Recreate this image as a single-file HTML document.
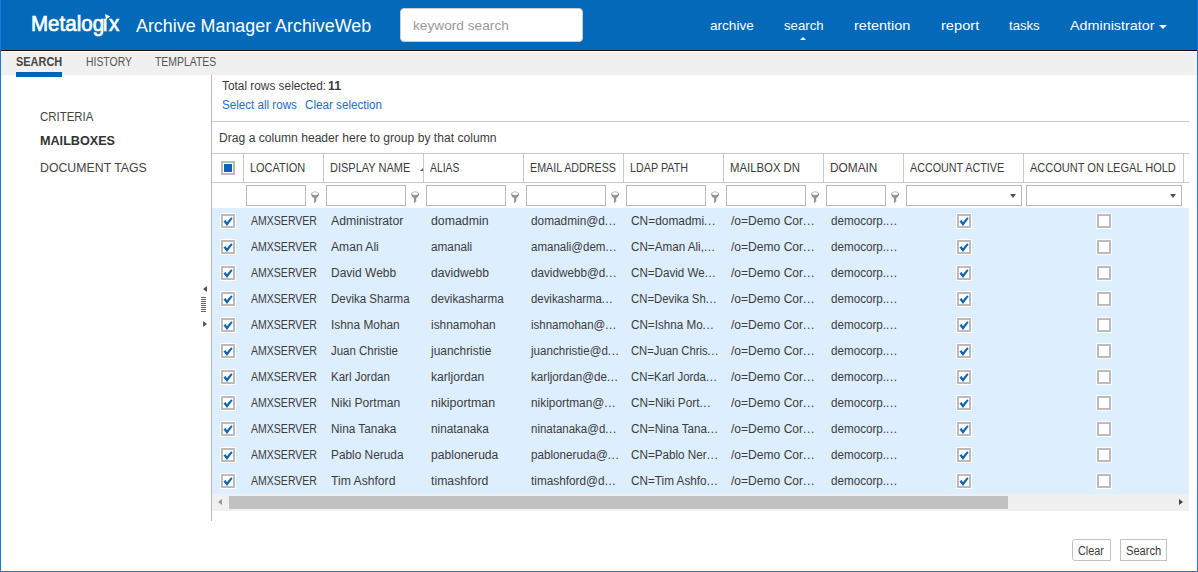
<!DOCTYPE html><html><head><meta charset="utf-8"><title>ArchiveWeb</title><style>*{margin:0;padding:0;box-sizing:border-box}
html,body{width:1198px;height:572px;overflow:hidden;background:#fff}
body{font-family:"Liberation Sans",sans-serif;font-size:12px;color:#333}
i{display:block;font-style:normal}
#frame{position:absolute;left:0;top:0;width:1198px;height:572px;background:#fff;overflow:hidden}
#frame>*{position:absolute}
.t{white-space:nowrap;transform-origin:0 0;line-height:14px;font-size:12px;color:#3c3c3c}
.bl{left:0;top:0;width:1px;height:572px;background:#177bd3}
.br{left:1197px;top:0;width:1px;height:572px;background:#177bd3}
.bb{left:0;top:571px;width:1198px;height:1px;background:#177bd3}
#hdr{left:0;top:0;width:1198px;height:51px;background:#0369b8;border-bottom:1px solid #111}
.logo{font-size:21.5px;color:#fff;line-height:26px;-webkit-text-stroke:0.7px #fff}
.logotri{left:104.5px;top:13.5px}
.title{font-size:18px;color:#fff;line-height:24px}
.kw{left:400px;top:8px;width:183px;height:34px;background:#fff;border-radius:4px;border:1px solid #ccc}
.kwt{font-size:13.6px;color:#999;line-height:18px}
.menu{font-size:13.6px;color:#fff;line-height:18px}
.uptri{left:799.6px;top:36.5px;border-left:3.7px solid transparent;border-right:3.7px solid transparent;border-bottom:3.8px solid #fff}
.caret{left:1159.1px;top:24.8px;border-left:4px solid transparent;border-right:4px solid transparent;border-top:4px solid #fff}
#nav{left:0;top:52px;width:1198px;height:23px;background:#f0f0f0}
.n1{font-weight:bold;color:#444}
.n2{color:#555}
.nu{left:16px;top:72px;width:46px;height:5px;background:#0067b8}
.sd{font-size:13px;line-height:16px;color:#444}
.sdb{font-weight:bold;color:#333}
.gl{left:211px;top:75px;width:1px;height:446px;background:#bbb}
.gb{font-weight:bold}
.lk{color:#1670c8}
.hl1{left:212px;top:121px;width:977px;height:1px;background:#c8c8c8}
.hl2{left:212px;top:153px;width:977px;height:1px;background:#c8c8c8}
.hl3{left:212px;top:182px;width:977px;height:1px;background:#c8c8c8}
.vd{top:153px;width:1px;height:30px;background:#c8c8c8}
.hcb{left:221px;top:161px;width:14px;height:14px;border:2px solid #bbb;background:#fff}
.hcb b{position:absolute;left:1px;top:1px;width:8px;height:8px;background:#0a64b8}
.sort{left:420px;top:168px;border-left:3px solid transparent;border-bottom:3px solid #555}
.fi{top:185px;height:21px;border:1px solid #bbb;background:#fff}
.pin{top:190.6px}
.dd{top:194px;border-left:3.5px solid transparent;border-right:3.5px solid transparent;border-top:4px solid #505050}
.rowsbg{left:212px;top:208px;width:977px;height:286px;background:#ddeeff}
.cb{width:16px;height:16px;border:1px solid #fff;background:#fff;box-shadow:inset 0 0 0 2px #bbb}
.cb svg{position:absolute;left:2px;top:2px}
.sb{left:212px;top:494px;width:977px;height:17px;background:#f0f0f0}
.sb>*{position:absolute}
.thumb{left:17px;top:2px;width:779px;height:13px;background:#c1c1c1}
.sbl{left:5.7px;top:4.7px;border-top:3.8px solid transparent;border-bottom:3.8px solid transparent;border-right:4.5px solid #999}
.sbr{left:966.8px;top:4.7px;border-top:3.8px solid transparent;border-bottom:3.8px solid transparent;border-left:4.5px solid #444}
.btn{top:539px;height:22px;border:1px solid #c2c2c2;background:#fff}
.b1{left:1072px;width:39px;border-radius:3px 0 0 3px}.b2{left:1120px;width:47px}
.spl-up{left:202.5px;top:286px;border-top:3.5px solid transparent;border-bottom:3.5px solid transparent;border-right:4px solid #555}
.spl-rt{left:203px;top:320.8px;border-top:3.5px solid transparent;border-bottom:3.5px solid transparent;border-left:4px solid #555}
.spl-grip{left:201px;top:297px;width:5px;height:15px;background:repeating-linear-gradient(#666 0 1px,#fff 1px 2px)}
</style></head><body>
<div id="frame">
<div id="hdr"></div>
<span class="t logo" style="left:31.3px;top:11px;transform:scaleX(0.9551);">Metalog<span style="margin-left:-1.8px;margin-right:1px">ı</span>x</span>
<svg class="logotri" width="6" height="6" viewBox="0 0 6 6"><path d="M0.1 0.1 L5.1 2.6 L0.9 5.4 Z" fill="#fff"/></svg>
<span class="t title" style="left:136px;top:14px;transform:scaleX(0.9929);">Archive Manager ArchiveWeb</span>
<div class="kw"></div>
<span class="t kwt" style="left:413px;top:17px;transform:scaleX(1.0070);">keyword search</span>
<span class="t menu" style="left:709.6px;top:17px;transform:scaleX(0.9992);">archive</span>
<span class="t menu" style="left:783.6px;top:17px;transform:scaleX(0.9711);">search</span>
<span class="t menu" style="left:853.6px;top:17px;transform:scaleX(1.0660);">retention</span>
<span class="t menu" style="left:940.6px;top:17px;transform:scaleX(1.0764);">report</span>
<span class="t menu" style="left:1008.6px;top:17px;transform:scaleX(0.9676);">tasks</span>
<span class="t menu" style="left:1069.6px;top:17px;transform:scaleX(1.0549);">Administrator</span>
<i class="uptri"></i><i class="caret"></i>
<div id="nav"></div><i class="nu"></i>
<span class="t n1" style="left:15.5px;top:55px;transform:scaleX(0.9134);">SEARCH</span>
<span class="t n2" style="left:85.7px;top:55px;transform:scaleX(0.8678);">HISTORY</span>
<span class="t n2" style="left:155.3px;top:55px;transform:scaleX(0.8689);">TEMPLATES</span>
<span class="t sd" style="left:40px;top:109px;transform:scaleX(0.8784);">CRITERIA</span>
<span class="t sd sdb" style="left:39.5px;top:133px;transform:scaleX(0.9705);">MAILBOXES</span>
<span class="t sd" style="left:40px;top:160px;transform:scaleX(0.9476);">DOCUMENT TAGS</span>
<i class="spl-up"></i><i class="spl-grip"></i><i class="spl-rt"></i>
<i class="gl"></i>
<span class="t g" style="left:222px;top:79px;transform:scaleX(0.9872);">Total rows selected: </span>
<span class="t g gb" style="left:328px;top:79px;transform:scaleX(1.0246);">11</span>
<span class="t lk" style="left:222px;top:98px;transform:scaleX(0.9679);">Select all rows</span>
<span class="t lk" style="left:305px;top:98px;transform:scaleX(0.9708);">Clear selection</span>
<i class="hl1"></i><i class="hl2"></i><i class="hl3"></i>
<span class="t g" style="left:219px;top:131px;transform:scaleX(1.0096);">Drag a column header here to group by that column</span>
<i class="vd" style="left:243px"></i>
<span class="t g" style="left:250.1px;top:161px;transform:scaleX(0.9133);">LOCATION</span>
<i class="vd" style="left:323px"></i>
<span class="t g" style="left:330.1px;top:161px;transform:scaleX(0.9178);">DISPLAY NAME</span>
<i class="vd" style="left:423px"></i>
<span class="t g" style="left:430.1px;top:161px;transform:scaleX(0.8647);">ALIAS</span>
<i class="vd" style="left:523px"></i>
<span class="t g" style="left:530.1px;top:161px;transform:scaleX(0.8932);">EMAIL ADDRESS</span>
<i class="vd" style="left:623px"></i>
<span class="t g" style="left:630.1px;top:161px;transform:scaleX(0.8968);">LDAP PATH</span>
<i class="vd" style="left:723px"></i>
<span class="t g" style="left:730.1px;top:161px;transform:scaleX(0.9456);">MAILBOX DN</span>
<i class="vd" style="left:823px"></i>
<span class="t g" style="left:830.1px;top:161px;transform:scaleX(0.9880);">DOMAIN</span>
<i class="vd" style="left:903px"></i>
<span class="t g" style="left:910.1px;top:161px;transform:scaleX(0.8961);">ACCOUNT ACTIVE</span>
<i class="vd" style="left:1023px"></i>
<span class="t g" style="left:1030.1px;top:161px;transform:scaleX(0.9187);">ACCOUNT ON LEGAL HOLD</span>
<i class="vd" style="left:1183px"></i>
<i class="hcb"><b></b></i>
<i class="sort"></i>
<i class="fi" style="left:246px;width:60px"></i>
<svg class="pin" style="left:310.8px" width="9" height="13" viewBox="0 0 9 13"><path d="M0.2 3 C0.2 5.6 2 6.6 3.1 6.9 L3.1 12.2 L5.2 10.2 L5.2 6.9 C6.3 6.6 8 5.6 8 3 C8 1.2 6 0.4 4.1 0.4 C2.2 0.4 0.2 1.2 0.2 3 Z" fill="#909090"/><ellipse cx="4.1" cy="2.6" rx="3.1" ry="1.6" fill="#f6f6f6"/></svg>
<i class="fi" style="left:326px;width:80px"></i>
<svg class="pin" style="left:410.8px" width="9" height="13" viewBox="0 0 9 13"><path d="M0.2 3 C0.2 5.6 2 6.6 3.1 6.9 L3.1 12.2 L5.2 10.2 L5.2 6.9 C6.3 6.6 8 5.6 8 3 C8 1.2 6 0.4 4.1 0.4 C2.2 0.4 0.2 1.2 0.2 3 Z" fill="#909090"/><ellipse cx="4.1" cy="2.6" rx="3.1" ry="1.6" fill="#f6f6f6"/></svg>
<i class="fi" style="left:426px;width:80px"></i>
<svg class="pin" style="left:510.8px" width="9" height="13" viewBox="0 0 9 13"><path d="M0.2 3 C0.2 5.6 2 6.6 3.1 6.9 L3.1 12.2 L5.2 10.2 L5.2 6.9 C6.3 6.6 8 5.6 8 3 C8 1.2 6 0.4 4.1 0.4 C2.2 0.4 0.2 1.2 0.2 3 Z" fill="#909090"/><ellipse cx="4.1" cy="2.6" rx="3.1" ry="1.6" fill="#f6f6f6"/></svg>
<i class="fi" style="left:526px;width:80px"></i>
<svg class="pin" style="left:610.8px" width="9" height="13" viewBox="0 0 9 13"><path d="M0.2 3 C0.2 5.6 2 6.6 3.1 6.9 L3.1 12.2 L5.2 10.2 L5.2 6.9 C6.3 6.6 8 5.6 8 3 C8 1.2 6 0.4 4.1 0.4 C2.2 0.4 0.2 1.2 0.2 3 Z" fill="#909090"/><ellipse cx="4.1" cy="2.6" rx="3.1" ry="1.6" fill="#f6f6f6"/></svg>
<i class="fi" style="left:626px;width:80px"></i>
<svg class="pin" style="left:710.8px" width="9" height="13" viewBox="0 0 9 13"><path d="M0.2 3 C0.2 5.6 2 6.6 3.1 6.9 L3.1 12.2 L5.2 10.2 L5.2 6.9 C6.3 6.6 8 5.6 8 3 C8 1.2 6 0.4 4.1 0.4 C2.2 0.4 0.2 1.2 0.2 3 Z" fill="#909090"/><ellipse cx="4.1" cy="2.6" rx="3.1" ry="1.6" fill="#f6f6f6"/></svg>
<i class="fi" style="left:726px;width:80px"></i>
<svg class="pin" style="left:810.8px" width="9" height="13" viewBox="0 0 9 13"><path d="M0.2 3 C0.2 5.6 2 6.6 3.1 6.9 L3.1 12.2 L5.2 10.2 L5.2 6.9 C6.3 6.6 8 5.6 8 3 C8 1.2 6 0.4 4.1 0.4 C2.2 0.4 0.2 1.2 0.2 3 Z" fill="#909090"/><ellipse cx="4.1" cy="2.6" rx="3.1" ry="1.6" fill="#f6f6f6"/></svg>
<i class="fi" style="left:826px;width:60px"></i>
<svg class="pin" style="left:890.8px" width="9" height="13" viewBox="0 0 9 13"><path d="M0.2 3 C0.2 5.6 2 6.6 3.1 6.9 L3.1 12.2 L5.2 10.2 L5.2 6.9 C6.3 6.6 8 5.6 8 3 C8 1.2 6 0.4 4.1 0.4 C2.2 0.4 0.2 1.2 0.2 3 Z" fill="#909090"/><ellipse cx="4.1" cy="2.6" rx="3.1" ry="1.6" fill="#f6f6f6"/></svg>
<i class="fi" style="left:906px;width:116px"></i>
<i class="dd" style="left:1010px"></i>
<i class="fi" style="left:1026px;width:156px"></i>
<i class="dd" style="left:1170px"></i>
<i class="rowsbg"></i>
<i class="cb" style="left:220px;top:213px"><svg width="10" height="10" viewBox="0 0 10 10"><path d="M0.5 5.6 L2.4 4.0 L3.9 6.2 L8.1 1.3 L9.6 2.4 L4.0 9.9 Z" fill="#0a64b8"/></svg></i>
<span class="t g" style="left:250.7px;top:214px;transform:scaleX(0.8778);">AMXSERVER</span>
<span class="t g" style="left:330.7px;top:214px;transform:scaleX(1.0245);">Administrator</span>
<span class="t g" style="left:430.7px;top:214px;transform:scaleX(1.0274);">domadmin</span>
<span class="t g" style="left:530.7px;top:214px;transform:scaleX(0.9863);">domadmin@d<span style="letter-spacing:0.6px">...</span></span>
<span class="t g" style="left:630.7px;top:214px;transform:scaleX(0.9920);">CN=domadmi<span style="letter-spacing:0.6px">...</span></span>
<span class="t g" style="left:730.7px;top:214px;transform:scaleX(1.0057);">/o=Demo Cor<span style="letter-spacing:0.6px">...</span></span>
<span class="t g" style="left:830.7px;top:214px;transform:scaleX(0.9711);">democorp.<span style="letter-spacing:0.6px">...</span></span>
<i class="cb" style="left:956px;top:213px"><svg width="10" height="10" viewBox="0 0 10 10"><path d="M0.5 5.6 L2.4 4.0 L3.9 6.2 L8.1 1.3 L9.6 2.4 L4.0 9.9 Z" fill="#0a64b8"/></svg></i>
<i class="cb" style="left:1096px;top:213px"></i>
<i class="cb" style="left:220px;top:239px"><svg width="10" height="10" viewBox="0 0 10 10"><path d="M0.5 5.6 L2.4 4.0 L3.9 6.2 L8.1 1.3 L9.6 2.4 L4.0 9.9 Z" fill="#0a64b8"/></svg></i>
<span class="t g" style="left:250.7px;top:240px;transform:scaleX(0.8778);">AMXSERVER</span>
<span class="t g" style="left:330.7px;top:240px;transform:scaleX(1.0089);">Aman Ali</span>
<span class="t g" style="left:430.7px;top:240px;transform:scaleX(0.9809);">amanali</span>
<span class="t g" style="left:530.7px;top:240px;transform:scaleX(0.9596);">amanali@dem<span style="letter-spacing:0.6px">...</span></span>
<span class="t g" style="left:630.7px;top:240px;transform:scaleX(0.9722);">CN=Aman Ali,<span style="letter-spacing:0.6px">...</span></span>
<span class="t g" style="left:730.7px;top:240px;transform:scaleX(1.0057);">/o=Demo Cor<span style="letter-spacing:0.6px">...</span></span>
<span class="t g" style="left:830.7px;top:240px;transform:scaleX(0.9711);">democorp.<span style="letter-spacing:0.6px">...</span></span>
<i class="cb" style="left:956px;top:239px"><svg width="10" height="10" viewBox="0 0 10 10"><path d="M0.5 5.6 L2.4 4.0 L3.9 6.2 L8.1 1.3 L9.6 2.4 L4.0 9.9 Z" fill="#0a64b8"/></svg></i>
<i class="cb" style="left:1096px;top:239px"></i>
<i class="cb" style="left:220px;top:265px"><svg width="10" height="10" viewBox="0 0 10 10"><path d="M0.5 5.6 L2.4 4.0 L3.9 6.2 L8.1 1.3 L9.6 2.4 L4.0 9.9 Z" fill="#0a64b8"/></svg></i>
<span class="t g" style="left:250.7px;top:266px;transform:scaleX(0.8778);">AMXSERVER</span>
<span class="t g" style="left:330.7px;top:266px;transform:scaleX(1.0001);">David Webb</span>
<span class="t g" style="left:430.7px;top:266px;transform:scaleX(1.0091);">davidwebb</span>
<span class="t g" style="left:530.7px;top:266px;transform:scaleX(0.9750);">davidwebb@d<span style="letter-spacing:0.6px">...</span></span>
<span class="t g" style="left:630.7px;top:266px;transform:scaleX(0.9673);">CN=David We<span style="letter-spacing:0.6px">...</span></span>
<span class="t g" style="left:730.7px;top:266px;transform:scaleX(1.0057);">/o=Demo Cor<span style="letter-spacing:0.6px">...</span></span>
<span class="t g" style="left:830.7px;top:266px;transform:scaleX(0.9711);">democorp.<span style="letter-spacing:0.6px">...</span></span>
<i class="cb" style="left:956px;top:265px"><svg width="10" height="10" viewBox="0 0 10 10"><path d="M0.5 5.6 L2.4 4.0 L3.9 6.2 L8.1 1.3 L9.6 2.4 L4.0 9.9 Z" fill="#0a64b8"/></svg></i>
<i class="cb" style="left:1096px;top:265px"></i>
<i class="cb" style="left:220px;top:291px"><svg width="10" height="10" viewBox="0 0 10 10"><path d="M0.5 5.6 L2.4 4.0 L3.9 6.2 L8.1 1.3 L9.6 2.4 L4.0 9.9 Z" fill="#0a64b8"/></svg></i>
<span class="t g" style="left:250.7px;top:292px;transform:scaleX(0.8778);">AMXSERVER</span>
<span class="t g" style="left:330.7px;top:292px;transform:scaleX(0.9577);">Devika Sharma</span>
<span class="t g" style="left:430.7px;top:292px;transform:scaleX(0.9723);">devikasharma</span>
<span class="t g" style="left:530.7px;top:292px;transform:scaleX(0.9485);">devikasharma<span style="letter-spacing:0.6px">...</span></span>
<span class="t g" style="left:630.7px;top:292px;transform:scaleX(0.9456);">CN=Devika Sh<span style="letter-spacing:0.6px">...</span></span>
<span class="t g" style="left:730.7px;top:292px;transform:scaleX(1.0057);">/o=Demo Cor<span style="letter-spacing:0.6px">...</span></span>
<span class="t g" style="left:830.7px;top:292px;transform:scaleX(0.9711);">democorp.<span style="letter-spacing:0.6px">...</span></span>
<i class="cb" style="left:956px;top:291px"><svg width="10" height="10" viewBox="0 0 10 10"><path d="M0.5 5.6 L2.4 4.0 L3.9 6.2 L8.1 1.3 L9.6 2.4 L4.0 9.9 Z" fill="#0a64b8"/></svg></i>
<i class="cb" style="left:1096px;top:291px"></i>
<i class="cb" style="left:220px;top:317px"><svg width="10" height="10" viewBox="0 0 10 10"><path d="M0.5 5.6 L2.4 4.0 L3.9 6.2 L8.1 1.3 L9.6 2.4 L4.0 9.9 Z" fill="#0a64b8"/></svg></i>
<span class="t g" style="left:250.7px;top:318px;transform:scaleX(0.8778);">AMXSERVER</span>
<span class="t g" style="left:330.7px;top:318px;transform:scaleX(0.9906);">Ishna Mohan</span>
<span class="t g" style="left:430.7px;top:318px;transform:scaleX(0.9893);">ishnamohan</span>
<span class="t g" style="left:530.7px;top:318px;transform:scaleX(0.9574);">ishnamohan@<span style="letter-spacing:0.6px">...</span></span>
<span class="t g" style="left:630.7px;top:318px;transform:scaleX(0.9718);">CN=Ishna Mo<span style="letter-spacing:0.6px">...</span></span>
<span class="t g" style="left:730.7px;top:318px;transform:scaleX(1.0057);">/o=Demo Cor<span style="letter-spacing:0.6px">...</span></span>
<span class="t g" style="left:830.7px;top:318px;transform:scaleX(0.9711);">democorp.<span style="letter-spacing:0.6px">...</span></span>
<i class="cb" style="left:956px;top:317px"><svg width="10" height="10" viewBox="0 0 10 10"><path d="M0.5 5.6 L2.4 4.0 L3.9 6.2 L8.1 1.3 L9.6 2.4 L4.0 9.9 Z" fill="#0a64b8"/></svg></i>
<i class="cb" style="left:1096px;top:317px"></i>
<i class="cb" style="left:220px;top:343px"><svg width="10" height="10" viewBox="0 0 10 10"><path d="M0.5 5.6 L2.4 4.0 L3.9 6.2 L8.1 1.3 L9.6 2.4 L4.0 9.9 Z" fill="#0a64b8"/></svg></i>
<span class="t g" style="left:250.7px;top:344px;transform:scaleX(0.8778);">AMXSERVER</span>
<span class="t g" style="left:330.7px;top:344px;transform:scaleX(0.9548);">Juan Christie</span>
<span class="t g" style="left:430.7px;top:344px;transform:scaleX(0.9936);">juanchristie</span>
<span class="t g" style="left:530.7px;top:344px;transform:scaleX(0.9660);">juanchristie@d<span style="letter-spacing:0.6px">...</span></span>
<span class="t g" style="left:630.7px;top:344px;transform:scaleX(0.9374);">CN=Juan Chris<span style="letter-spacing:0.6px">...</span></span>
<span class="t g" style="left:730.7px;top:344px;transform:scaleX(1.0057);">/o=Demo Cor<span style="letter-spacing:0.6px">...</span></span>
<span class="t g" style="left:830.7px;top:344px;transform:scaleX(0.9711);">democorp.<span style="letter-spacing:0.6px">...</span></span>
<i class="cb" style="left:956px;top:343px"><svg width="10" height="10" viewBox="0 0 10 10"><path d="M0.5 5.6 L2.4 4.0 L3.9 6.2 L8.1 1.3 L9.6 2.4 L4.0 9.9 Z" fill="#0a64b8"/></svg></i>
<i class="cb" style="left:1096px;top:343px"></i>
<i class="cb" style="left:220px;top:369px"><svg width="10" height="10" viewBox="0 0 10 10"><path d="M0.5 5.6 L2.4 4.0 L3.9 6.2 L8.1 1.3 L9.6 2.4 L4.0 9.9 Z" fill="#0a64b8"/></svg></i>
<span class="t g" style="left:250.7px;top:370px;transform:scaleX(0.8778);">AMXSERVER</span>
<span class="t g" style="left:330.7px;top:370px;transform:scaleX(0.9594);">Karl Jordan</span>
<span class="t g" style="left:430.7px;top:370px;transform:scaleX(1.0096);">karljordan</span>
<span class="t g" style="left:530.7px;top:370px;transform:scaleX(0.9710);">karljordan@de<span style="letter-spacing:0.6px">...</span></span>
<span class="t g" style="left:630.7px;top:370px;transform:scaleX(0.9481);">CN=Karl Jorda<span style="letter-spacing:0.6px">...</span></span>
<span class="t g" style="left:730.7px;top:370px;transform:scaleX(1.0057);">/o=Demo Cor<span style="letter-spacing:0.6px">...</span></span>
<span class="t g" style="left:830.7px;top:370px;transform:scaleX(0.9711);">democorp.<span style="letter-spacing:0.6px">...</span></span>
<i class="cb" style="left:956px;top:369px"><svg width="10" height="10" viewBox="0 0 10 10"><path d="M0.5 5.6 L2.4 4.0 L3.9 6.2 L8.1 1.3 L9.6 2.4 L4.0 9.9 Z" fill="#0a64b8"/></svg></i>
<i class="cb" style="left:1096px;top:369px"></i>
<i class="cb" style="left:220px;top:395px"><svg width="10" height="10" viewBox="0 0 10 10"><path d="M0.5 5.6 L2.4 4.0 L3.9 6.2 L8.1 1.3 L9.6 2.4 L4.0 9.9 Z" fill="#0a64b8"/></svg></i>
<span class="t g" style="left:250.7px;top:396px;transform:scaleX(0.8778);">AMXSERVER</span>
<span class="t g" style="left:330.7px;top:396px;transform:scaleX(1.0081);">Niki Portman</span>
<span class="t g" style="left:430.7px;top:396px;transform:scaleX(1.0332);">nikiportman</span>
<span class="t g" style="left:530.7px;top:396px;transform:scaleX(0.9878);">nikiportman@<span style="letter-spacing:0.6px">...</span></span>
<span class="t g" style="left:630.7px;top:396px;transform:scaleX(0.9827);">CN=Niki Port<span style="letter-spacing:0.6px">...</span></span>
<span class="t g" style="left:730.7px;top:396px;transform:scaleX(1.0057);">/o=Demo Cor<span style="letter-spacing:0.6px">...</span></span>
<span class="t g" style="left:830.7px;top:396px;transform:scaleX(0.9711);">democorp.<span style="letter-spacing:0.6px">...</span></span>
<i class="cb" style="left:956px;top:395px"><svg width="10" height="10" viewBox="0 0 10 10"><path d="M0.5 5.6 L2.4 4.0 L3.9 6.2 L8.1 1.3 L9.6 2.4 L4.0 9.9 Z" fill="#0a64b8"/></svg></i>
<i class="cb" style="left:1096px;top:395px"></i>
<i class="cb" style="left:220px;top:421px"><svg width="10" height="10" viewBox="0 0 10 10"><path d="M0.5 5.6 L2.4 4.0 L3.9 6.2 L8.1 1.3 L9.6 2.4 L4.0 9.9 Z" fill="#0a64b8"/></svg></i>
<span class="t g" style="left:250.7px;top:422px;transform:scaleX(0.8778);">AMXSERVER</span>
<span class="t g" style="left:330.7px;top:422px;transform:scaleX(0.9837);">Nina Tanaka</span>
<span class="t g" style="left:430.7px;top:422px;transform:scaleX(0.9829);">ninatanaka</span>
<span class="t g" style="left:530.7px;top:422px;transform:scaleX(0.9583);">ninatanaka@d<span style="letter-spacing:0.6px">...</span></span>
<span class="t g" style="left:630.7px;top:422px;transform:scaleX(0.9712);">CN=Nina Tana<span style="letter-spacing:0.6px">...</span></span>
<span class="t g" style="left:730.7px;top:422px;transform:scaleX(1.0057);">/o=Demo Cor<span style="letter-spacing:0.6px">...</span></span>
<span class="t g" style="left:830.7px;top:422px;transform:scaleX(0.9711);">democorp.<span style="letter-spacing:0.6px">...</span></span>
<i class="cb" style="left:956px;top:421px"><svg width="10" height="10" viewBox="0 0 10 10"><path d="M0.5 5.6 L2.4 4.0 L3.9 6.2 L8.1 1.3 L9.6 2.4 L4.0 9.9 Z" fill="#0a64b8"/></svg></i>
<i class="cb" style="left:1096px;top:421px"></i>
<i class="cb" style="left:220px;top:447px"><svg width="10" height="10" viewBox="0 0 10 10"><path d="M0.5 5.6 L2.4 4.0 L3.9 6.2 L8.1 1.3 L9.6 2.4 L4.0 9.9 Z" fill="#0a64b8"/></svg></i>
<span class="t g" style="left:250.7px;top:448px;transform:scaleX(0.8778);">AMXSERVER</span>
<span class="t g" style="left:330.7px;top:448px;transform:scaleX(0.9878);">Pablo Neruda</span>
<span class="t g" style="left:430.7px;top:448px;transform:scaleX(1.0091);">pabloneruda</span>
<span class="t g" style="left:530.7px;top:448px;transform:scaleX(0.9724);">pabloneruda@<span style="letter-spacing:0.6px">...</span></span>
<span class="t g" style="left:630.7px;top:448px;transform:scaleX(0.9744);">CN=Pablo Ner<span style="letter-spacing:0.6px">...</span></span>
<span class="t g" style="left:730.7px;top:448px;transform:scaleX(1.0057);">/o=Demo Cor<span style="letter-spacing:0.6px">...</span></span>
<span class="t g" style="left:830.7px;top:448px;transform:scaleX(0.9711);">democorp.<span style="letter-spacing:0.6px">...</span></span>
<i class="cb" style="left:956px;top:447px"><svg width="10" height="10" viewBox="0 0 10 10"><path d="M0.5 5.6 L2.4 4.0 L3.9 6.2 L8.1 1.3 L9.6 2.4 L4.0 9.9 Z" fill="#0a64b8"/></svg></i>
<i class="cb" style="left:1096px;top:447px"></i>
<i class="cb" style="left:220px;top:473px"><svg width="10" height="10" viewBox="0 0 10 10"><path d="M0.5 5.6 L2.4 4.0 L3.9 6.2 L8.1 1.3 L9.6 2.4 L4.0 9.9 Z" fill="#0a64b8"/></svg></i>
<span class="t g" style="left:250.7px;top:474px;transform:scaleX(0.8778);">AMXSERVER</span>
<span class="t g" style="left:330.7px;top:474px;transform:scaleX(1.0134);">Tim Ashford</span>
<span class="t g" style="left:430.7px;top:474px;transform:scaleX(1.0227);">timashford</span>
<span class="t g" style="left:530.7px;top:474px;transform:scaleX(0.9832);">timashford@d<span style="letter-spacing:0.6px">...</span></span>
<span class="t g" style="left:630.7px;top:474px;transform:scaleX(0.9795);">CN=Tim Ashfo<span style="letter-spacing:0.6px">...</span></span>
<span class="t g" style="left:730.7px;top:474px;transform:scaleX(1.0057);">/o=Demo Cor<span style="letter-spacing:0.6px">...</span></span>
<span class="t g" style="left:830.7px;top:474px;transform:scaleX(0.9711);">democorp.<span style="letter-spacing:0.6px">...</span></span>
<i class="cb" style="left:956px;top:473px"><svg width="10" height="10" viewBox="0 0 10 10"><path d="M0.5 5.6 L2.4 4.0 L3.9 6.2 L8.1 1.3 L9.6 2.4 L4.0 9.9 Z" fill="#0a64b8"/></svg></i>
<i class="cb" style="left:1096px;top:473px"></i>
<div class="sb"><i class="sbl"></i><i class="thumb"></i><i class="sbr"></i></div>
<div class="btn b1"></div><div class="btn b2"></div>
<span class="t g" style="left:1078px;top:544px;transform:scaleX(0.9063);">Clear</span>
<span class="t g" style="left:1126px;top:544px;transform:scaleX(0.9274);">Search</span>
<i class="bl"></i><i class="br"></i><i class="bb"></i>
</div></body></html>
